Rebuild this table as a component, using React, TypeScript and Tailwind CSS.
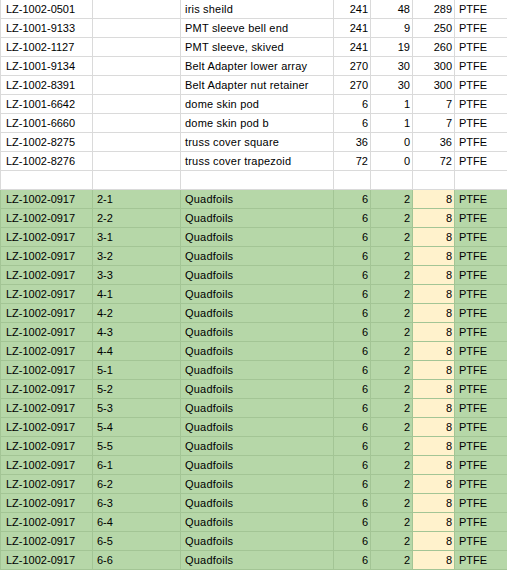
const top = [
  ["LZ-1002-0501", "", "iris sheild", "241", "48", "289", "PTFE"],
  ["LZ-1001-9133", "", "PMT sleeve bell end", "241", "9", "250", "PTFE"],
  ["LZ-1002-1127", "", "PMT sleeve, skived", "241", "19", "260", "PTFE"],
  ["LZ-1001-9134", "", "Belt Adapter lower array", "270", "30", "300", "PTFE"],
  ["LZ-1002-8391", "", "Belt Adapter nut retainer", "270", "30", "300", "PTFE"],
  ["LZ-1001-6642", "", "dome skin pod", "6", "1", "7", "PTFE"],
  ["LZ-1001-6660", "", "dome skin pod b", "6", "1", "7", "PTFE"],
  ["LZ-1002-8275", "", "truss cover square", "36", "0", "36", "PTFE"],
  ["LZ-1002-8276", "", "truss cover trapezoid", "72", "0", "72", "PTFE"],
  ["", "", "", "", "", "", ""],
];

const positions = [
  "2-1", "2-2", "3-1", "3-2", "3-3", "4-1", "4-2", "4-3", "4-4",
  "5-1", "5-2", "5-3", "5-4", "5-5", "6-1", "6-2", "6-3", "6-4", "6-5", "6-6",
];

const quad = positions.map((p) => ["LZ-1002-0917", p, "Quadfoils", "6", "2", "8", "PTFE"]);

// columns D, E, F hold numbers -> right aligned
const isNum = (i: number) => i >= 3 && i <= 5;

const Row = ({ cells, green }: { cells: string[]; green?: boolean }) => (
  <div className="grid grid-cols-[93px_88px_153px_37px_42px_42px_1fr] h-[19px]">
    {cells.map((c, i) => {
      let bg = green ? "bg-[#b6d7a8] border-[#a3c595]" : "bg-white border-[#dadada]";
      if (green && i === 5) bg = "bg-[#fff2cc] border-[#a3c595]";
      return (
        <div
          key={i}
          className={`flex items-center border-b overflow-hidden whitespace-nowrap ${i < 6 ? "border-r" : ""} ${
            i === 0 ? "border-l pl-[5px]" : ""
          } ${i === 2 ? "tracking-[0.2px]" : ""} ${isNum(i) ? "justify-end pr-[2px]" : i === 0 ? "" : "pl-[4px]"} ${bg}`}
        >
          {c}
        </div>
      );
    })}
  </div>
);

export default function App() {
  return (
    <div className="w-[507px] h-[570px] overflow-hidden bg-white text-[11px] leading-[13px] text-black font-['Liberation_Sans',Arial,sans-serif]">
      {top.map((r, i) => (
        <Row key={i} cells={r} />
      ))}
      {quad.map((r, i) => (
        <Row key={"q" + i} cells={r} green />
      ))}
    </div>
  );
}
